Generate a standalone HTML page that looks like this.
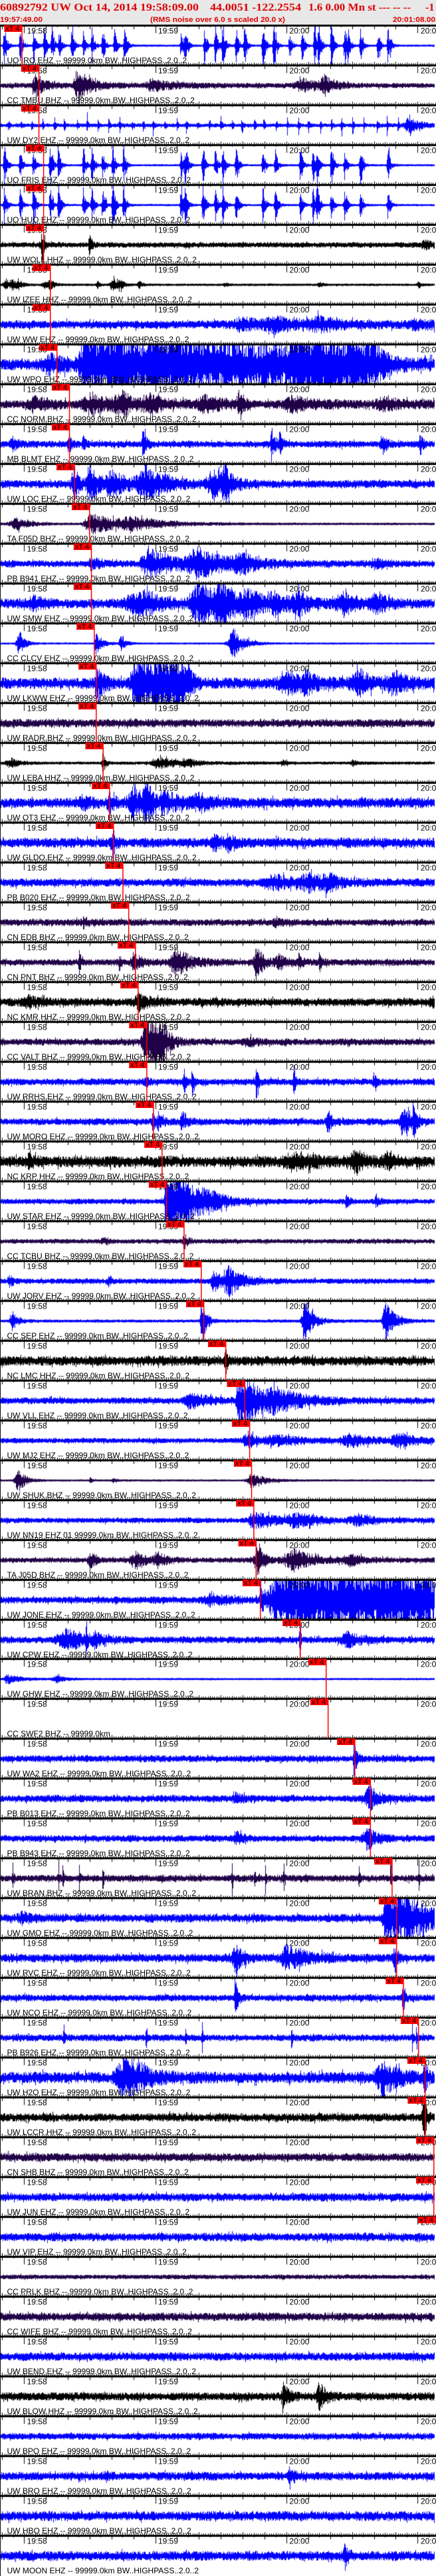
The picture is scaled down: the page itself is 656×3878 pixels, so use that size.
<!DOCTYPE html>
<html><head><meta charset="utf-8">
<style>
html,body{margin:0;padding:0;background:#fff;}
#w{position:relative;width:656px;height:3878px;overflow:hidden;}
canvas{position:absolute;left:0;top:0;}
svg{position:absolute;left:0;top:0;}
.t,.l{font-family:"Liberation Sans",sans-serif;font-size:12px;fill:#000;}
.x{font-family:"Liberation Sans",sans-serif;font-size:11px;fill:#000;}
.m,.v{fill:#f00;}
.h1{font-family:"Liberation Serif",serif;font-weight:bold;font-size:16px;fill:#e00000;}
.h2{font-family:"Liberation Sans",sans-serif;font-weight:bold;font-size:11px;fill:#e00000;}
</style></head><body><div id="w">
<canvas id="c" width="656" height="3878"></canvas>
<svg width="656" height="3878" viewBox="0 0 656 3878">
<rect x="0" y="0" width="656" height="37" fill="#e8e8e8"/>
<text class="h1" x="0" y="16" textLength="299" lengthAdjust="spacingAndGlyphs">60892792 UW Oct 14, 2014 19:58:09.00</text>
<text class="h1" x="316" y="16" textLength="137" lengthAdjust="spacingAndGlyphs">44.0051 -122.2554</text>
<text class="h1" x="464" y="16" textLength="154" lengthAdjust="spacingAndGlyphs">1.6 0.00 Mn st --- -- --</text>
<text class="h1" x="640" y="16">-1</text>
<text class="h2" x="0" y="33" textLength="64" lengthAdjust="spacingAndGlyphs">19:57:49.00</text>
<text class="h2" x="226" y="33" textLength="203" lengthAdjust="spacingAndGlyphs">(RMS noise over 6.0 s scaled 20.0 x)</text>
<text class="h2" x="591" y="33" textLength="64" lengthAdjust="spacingAndGlyphs">20:01:08.00</text>

<g transform="translate(0,38)"><text class="t" y="12.5"><tspan x="40.6">19:58</tspan><tspan x="238">19:59</tspan><tspan x="435.4">20:00</tspan><tspan x="632.9">20:01</tspan></text><text class="l" x="10.5" y="57">UO IRO EHZ -- 99999.0km BW..HIGHPASS..2.0..2</text><rect class="m" x="6.3" width="27" height="10"/><rect class="v" x="32.3" width="1.5" height="60"/><text class="x" x="8.3" y="8.5">xT 4</text></g>
<g transform="translate(0,98)"><text class="t" y="12.5"><tspan x="40.6">19:58</tspan><tspan x="238">19:59</tspan><tspan x="435.4">20:00</tspan><tspan x="632.9">20:01</tspan></text><text class="l" x="10.5" y="57">CC TMBU BHZ -- 99999.0km BW..HIGHPASS..2.0..2</text><rect class="m" x="31.8" width="27" height="10"/><rect class="v" x="57.8" width="1.5" height="60"/><text class="x" x="33.8" y="8.5">xT 4</text></g>
<g transform="translate(0,158)"><text class="t" y="12.5"><tspan x="40.6">19:58</tspan><tspan x="238">19:59</tspan><tspan x="435.4">20:00</tspan><tspan x="632.9">20:01</tspan></text><text class="l" x="10.5" y="57">UW DY2 EHZ -- 99999.0km BW..HIGHPASS..2.0..2</text><rect class="m" x="31.8" width="27" height="10"/><rect class="v" x="57.8" width="1.5" height="60"/><text class="x" x="33.8" y="8.5">xT 4</text></g>
<g transform="translate(0,218)"><text class="t" y="12.5"><tspan x="40.6">19:58</tspan><tspan x="238">19:59</tspan><tspan x="435.4">20:00</tspan><tspan x="632.9">20:01</tspan></text><text class="l" x="10.5" y="57">UO FRIS EHZ -- 99999.0km BW..HIGHPASS..2.0..2</text><rect class="m" x="38.9" width="27" height="10"/><rect class="v" x="64.9" width="1.5" height="60"/><text class="x" x="40.9" y="8.5">xT 4</text></g>
<g transform="translate(0,278)"><text class="t" y="12.5"><tspan x="40.6">19:58</tspan><tspan x="238">19:59</tspan><tspan x="435.4">20:00</tspan><tspan x="632.9">20:01</tspan></text><text class="l" x="10.5" y="57">UO HUO EHZ -- 99999.0km BW..HIGHPASS..2.0..2</text><rect class="m" x="38.9" width="27" height="10"/><rect class="v" x="64.9" width="1.5" height="60"/><text class="x" x="40.9" y="8.5">xT 4</text></g>
<g transform="translate(0,338)"><text class="t" y="12.5"><tspan x="40.6">19:58</tspan><tspan x="238">19:59</tspan><tspan x="435.4">20:00</tspan><tspan x="632.9">20:01</tspan></text><text class="l" x="10.5" y="57">UW WOLL HHZ -- 99999.0km BW..HIGHPASS..2.0..2</text><rect class="m" x="38.9" width="27" height="10"/><rect class="v" x="64.9" width="1.5" height="60"/><text class="x" x="40.9" y="8.5">xT 4</text></g>
<g transform="translate(0,398)"><text class="t" y="12.5"><tspan x="40.6">19:58</tspan><tspan x="238">19:59</tspan><tspan x="435.4">20:00</tspan><tspan x="632.9">20:01</tspan></text><text class="l" x="10.5" y="57">UW IZEE HHZ -- 99999.0km BW..HIGHPASS..2.0..2</text><rect class="m" x="49" width="27" height="10"/><rect class="v" x="75" width="1.5" height="60"/><text class="x" x="51" y="8.5">xT 4</text></g>
<g transform="translate(0,458)"><text class="t" y="12.5"><tspan x="40.6">19:58</tspan><tspan x="238">19:59</tspan><tspan x="435.4">20:00</tspan><tspan x="632.9">20:01</tspan></text><text class="l" x="10.5" y="57">UW WW EHZ -- 99999.0km BW..HIGHPASS..2.0..2</text><rect class="m" x="49" width="27" height="10"/><rect class="v" x="75" width="1.5" height="60"/><text class="x" x="51" y="8.5">xT 4</text></g>
<g transform="translate(0,518)"><text class="t" y="12.5"><tspan x="40.6">19:58</tspan><tspan x="238">19:59</tspan><tspan x="435.4">20:00</tspan><tspan x="632.9">20:01</tspan></text><text class="l" x="10.5" y="57">UW WPO EHZ -- 99999.0km BW..HIGHPASS..2.0..2</text><rect class="m" x="59" width="27" height="10"/><rect class="v" x="85" width="1.5" height="60"/><text class="x" x="61" y="8.5">xT 4</text></g>
<g transform="translate(0,578)"><text class="t" y="12.5"><tspan x="40.6">19:58</tspan><tspan x="238">19:59</tspan><tspan x="435.4">20:00</tspan><tspan x="632.9">20:01</tspan></text><text class="l" x="10.5" y="57">CC NORM BHZ -- 99999.0km BW..HIGHPASS..2.0..2</text><rect class="m" x="77.8" width="27" height="10"/><rect class="v" x="103.8" width="1.5" height="60"/><text class="x" x="79.8" y="8.5">xT 4</text></g>
<g transform="translate(0,638)"><text class="t" y="12.5"><tspan x="40.6">19:58</tspan><tspan x="238">19:59</tspan><tspan x="435.4">20:00</tspan><tspan x="632.9">20:01</tspan></text><text class="l" x="10.5" y="57">MB BLMT EHZ -- 99999.0km BW..HIGHPASS..2.0..2</text><rect class="m" x="77.8" width="27" height="10"/><rect class="v" x="103.8" width="1.5" height="60"/><text class="x" x="79.8" y="8.5">xT 4</text></g>
<g transform="translate(0,698)"><text class="t" y="12.5"><tspan x="40.6">19:58</tspan><tspan x="238">19:59</tspan><tspan x="435.4">20:00</tspan><tspan x="632.9">20:01</tspan></text><text class="l" x="10.5" y="57">UW LOC EHZ -- 99999.0km BW..HIGHPASS..2.0..2</text><rect class="m" x="85" width="27" height="10"/><rect class="v" x="111" width="1.5" height="60"/><text class="x" x="87" y="8.5">xT 4</text></g>
<g transform="translate(0,758)"><text class="t" y="12.5"><tspan x="40.6">19:58</tspan><tspan x="238">19:59</tspan><tspan x="435.4">20:00</tspan><tspan x="632.9">20:01</tspan></text><text class="l" x="10.5" y="57">TA F05D BHZ -- 99999.0km BW..HIGHPASS..2.0..2</text><rect class="m" x="108" width="27" height="10"/><rect class="v" x="134" width="1.5" height="60"/><text class="x" x="110" y="8.5">xT 4</text></g>
<g transform="translate(0,818)"><text class="t" y="12.5"><tspan x="40.6">19:58</tspan><tspan x="238">19:59</tspan><tspan x="435.4">20:00</tspan><tspan x="632.9">20:01</tspan></text><text class="l" x="10.5" y="57">PB B941 EHZ -- 99999.0km BW..HIGHPASS..2.0..2</text><rect class="m" x="110.8" width="27" height="10"/><rect class="v" x="136.8" width="1.5" height="60"/><text class="x" x="112.8" y="8.5">xT 4</text></g>
<g transform="translate(0,878)"><text class="t" y="12.5"><tspan x="40.6">19:58</tspan><tspan x="238">19:59</tspan><tspan x="435.4">20:00</tspan><tspan x="632.9">20:01</tspan></text><text class="l" x="10.5" y="57">UW SMW EHZ -- 99999.0km BW..HIGHPASS..2.0..2</text><rect class="m" x="110.8" width="27" height="10"/><rect class="v" x="136.8" width="1.5" height="60"/><text class="x" x="112.8" y="8.5">xT 4</text></g>
<g transform="translate(0,938)"><text class="t" y="12.5"><tspan x="40.6">19:58</tspan><tspan x="238">19:59</tspan><tspan x="435.4">20:00</tspan><tspan x="632.9">20:01</tspan></text><text class="l" x="10.5" y="57">CC CLCV EHZ -- 99999.0km BW..HIGHPASS..2.0..2</text><rect class="m" x="115.1" width="27" height="10"/><rect class="v" x="141.1" width="1.5" height="60"/><text class="x" x="117.1" y="8.5">xT 4</text></g>
<g transform="translate(0,998)"><text class="t" y="12.5"><tspan x="40.6">19:58</tspan><tspan x="238">19:59</tspan><tspan x="435.4">20:00</tspan><tspan x="632.9">20:01</tspan></text><text class="l" x="10.5" y="57">UW LKWW EHZ -- 99999.0km BW..HIGHPASS..2.0..2</text><rect class="m" x="118" width="27" height="10"/><rect class="v" x="144" width="1.5" height="60"/><text class="x" x="120" y="8.5">xT 4</text></g>
<g transform="translate(0,1058)"><text class="t" y="12.5"><tspan x="40.6">19:58</tspan><tspan x="238">19:59</tspan><tspan x="435.4">20:00</tspan><tspan x="632.9">20:01</tspan></text><text class="l" x="10.5" y="57">UW RADR BHZ -- 99999.0km BW..HIGHPASS..2.0..2</text><rect class="m" x="118" width="27" height="10"/><rect class="v" x="144" width="1.5" height="60"/><text class="x" x="120" y="8.5">xT 4</text></g>
<g transform="translate(0,1118)"><text class="t" y="12.5"><tspan x="40.6">19:58</tspan><tspan x="238">19:59</tspan><tspan x="435.4">20:00</tspan><tspan x="632.9">20:01</tspan></text><text class="l" x="10.5" y="57">UW LEBA HHZ -- 99999.0km BW..HIGHPASS..2.0..2</text><rect class="m" x="128.4" width="27" height="10"/><rect class="v" x="154.4" width="1.5" height="60"/><text class="x" x="130.4" y="8.5">xT 4</text></g>
<g transform="translate(0,1178)"><text class="t" y="12.5"><tspan x="40.6">19:58</tspan><tspan x="238">19:59</tspan><tspan x="435.4">20:00</tspan><tspan x="632.9">20:01</tspan></text><text class="l" x="10.5" y="57">UW OT3 EHZ -- 99999.0km BW..HIGHPASS..2.0..2</text><rect class="m" x="138.1" width="27" height="10"/><rect class="v" x="164.1" width="1.5" height="60"/><text class="x" x="140.1" y="8.5">xT 4</text></g>
<g transform="translate(0,1238)"><text class="t" y="12.5"><tspan x="40.6">19:58</tspan><tspan x="238">19:59</tspan><tspan x="435.4">20:00</tspan><tspan x="632.9">20:01</tspan></text><text class="l" x="10.5" y="57">UW GLDO EHZ -- 99999.0km BW..HIGHPASS..2.0..2</text><rect class="m" x="144" width="27" height="10"/><rect class="v" x="170" width="1.5" height="60"/><text class="x" x="146" y="8.5">xT 4</text></g>
<g transform="translate(0,1298)"><text class="t" y="12.5"><tspan x="40.6">19:58</tspan><tspan x="238">19:59</tspan><tspan x="435.4">20:00</tspan><tspan x="632.9">20:01</tspan></text><text class="l" x="10.5" y="57">PB B020 EHZ -- 99999.0km BW..HIGHPASS..2.0..2</text><rect class="m" x="158.2" width="27" height="10"/><rect class="v" x="184.2" width="1.5" height="60"/><text class="x" x="160.2" y="8.5">xT 4</text></g>
<g transform="translate(0,1358)"><text class="t" y="12.5"><tspan x="40.6">19:58</tspan><tspan x="238">19:59</tspan><tspan x="435.4">20:00</tspan><tspan x="632.9">20:01</tspan></text><text class="l" x="10.5" y="57">CN EDB BHZ -- 99999.0km BW..HIGHPASS..2.0..2</text><rect class="m" x="166.9" width="27" height="10"/><rect class="v" x="192.9" width="1.5" height="60"/><text class="x" x="168.9" y="8.5">xT 4</text></g>
<g transform="translate(0,1418)"><text class="t" y="12.5"><tspan x="40.6">19:58</tspan><tspan x="238">19:59</tspan><tspan x="435.4">20:00</tspan><tspan x="632.9">20:01</tspan></text><text class="l" x="10.5" y="57">CN PNT BHZ -- 99999.0km BW..HIGHPASS..2.0..2</text><rect class="m" x="177" width="27" height="10"/><rect class="v" x="203" width="1.5" height="60"/><text class="x" x="179" y="8.5">xT 4</text></g>
<g transform="translate(0,1478)"><text class="t" y="12.5"><tspan x="40.6">19:58</tspan><tspan x="238">19:59</tspan><tspan x="435.4">20:00</tspan><tspan x="632.9">20:01</tspan></text><text class="l" x="10.5" y="57">NC KMR HHZ -- 99999.0km BW..HIGHPASS..2.0..2</text><rect class="m" x="181.1" width="27" height="10"/><rect class="v" x="207.1" width="1.5" height="60"/><text class="x" x="183.1" y="8.5">xT 4</text></g>
<g transform="translate(0,1538)"><text class="t" y="12.5"><tspan x="40.6">19:58</tspan><tspan x="238">19:59</tspan><tspan x="435.4">20:00</tspan><tspan x="632.9">20:01</tspan></text><text class="l" x="10.5" y="57">CC VALT BHZ -- 99999.0km BW..HIGHPASS..2.0..2</text><rect class="m" x="194.2" width="27" height="10"/><rect class="v" x="220.2" width="1.5" height="60"/><text class="x" x="196.2" y="8.5">xT 4</text></g>
<g transform="translate(0,1598)"><text class="t" y="12.5"><tspan x="40.6">19:58</tspan><tspan x="238">19:59</tspan><tspan x="435.4">20:00</tspan><tspan x="632.9">20:01</tspan></text><text class="l" x="10.5" y="57">UW RRHS EHZ -- 99999.0km BW..HIGHPASS..2.0..2</text><rect class="m" x="194.2" width="27" height="10"/><rect class="v" x="220.2" width="1.5" height="60"/><text class="x" x="196.2" y="8.5">xT 4</text></g>
<g transform="translate(0,1658)"><text class="t" y="12.5"><tspan x="40.6">19:58</tspan><tspan x="238">19:59</tspan><tspan x="435.4">20:00</tspan><tspan x="632.9">20:01</tspan></text><text class="l" x="10.5" y="57">UW MORO EHZ -- 99999.0km BW..HIGHPASS..2.0..2</text><rect class="m" x="204.2" width="27" height="10"/><rect class="v" x="230.2" width="1.5" height="60"/><text class="x" x="206.2" y="8.5">xT 4</text></g>
<g transform="translate(0,1718)"><text class="t" y="12.5"><tspan x="40.6">19:58</tspan><tspan x="238">19:59</tspan><tspan x="435.4">20:00</tspan><tspan x="632.9">20:01</tspan></text><text class="l" x="10.5" y="57">NC KRP HHZ -- 99999.0km BW..HIGHPASS..2.0..2</text><rect class="m" x="217.1" width="27" height="10"/><rect class="v" x="243.1" width="1.5" height="60"/><text class="x" x="219.1" y="8.5">xT 4</text></g>
<g transform="translate(0,1778)"><text class="t" y="12.5"><tspan x="40.6">19:58</tspan><tspan x="238">19:59</tspan><tspan x="435.4">20:00</tspan><tspan x="632.9">20:01</tspan></text><text class="l" x="10.5" y="57">UW STAR EHZ -- 99999.0km BW..HIGHPASS..2.0..2</text><rect class="m" x="223.8" width="27" height="10"/><rect class="v" x="249.8" width="1.5" height="60"/><text class="x" x="225.8" y="8.5">xT 4</text></g>
<g transform="translate(0,1838)"><text class="t" y="12.5"><tspan x="40.6">19:58</tspan><tspan x="238">19:59</tspan><tspan x="435.4">20:00</tspan><tspan x="632.9">20:01</tspan></text><text class="l" x="10.5" y="57">CC TCBU BHZ -- 99999.0km BW..HIGHPASS..2.0..2</text><rect class="m" x="250.2" width="27" height="10"/><rect class="v" x="276.2" width="1.5" height="60"/><text class="x" x="252.2" y="8.5">xT 4</text></g>
<g transform="translate(0,1898)"><text class="t" y="12.5"><tspan x="40.6">19:58</tspan><tspan x="238">19:59</tspan><tspan x="435.4">20:00</tspan><tspan x="632.9">20:01</tspan></text><text class="l" x="10.5" y="57">UW JORV EHZ -- 99999.0km BW..HIGHPASS..2.0..2</text><rect class="m" x="276.1" width="27" height="10"/><rect class="v" x="302.1" width="1.5" height="60"/><text class="x" x="278.1" y="8.5">xT 4</text></g>
<g transform="translate(0,1958)"><text class="t" y="12.5"><tspan x="40.6">19:58</tspan><tspan x="238">19:59</tspan><tspan x="435.4">20:00</tspan><tspan x="632.9">20:01</tspan></text><text class="l" x="10.5" y="57">CC SEP EHZ -- 99999.0km BW..HIGHPASS..2.0..2</text><rect class="m" x="279.9" width="27" height="10"/><rect class="v" x="305.9" width="1.5" height="60"/><text class="x" x="281.9" y="8.5">xT 4</text></g>
<g transform="translate(0,2018)"><text class="t" y="12.5"><tspan x="40.6">19:58</tspan><tspan x="238">19:59</tspan><tspan x="435.4">20:00</tspan><tspan x="632.9">20:01</tspan></text><text class="l" x="10.5" y="57">NC LMC HHZ -- 99999.0km BW..HIGHPASS..2.0..2</text><rect class="m" x="312.9" width="27" height="10"/><rect class="v" x="338.9" width="1.5" height="60"/><text class="x" x="314.9" y="8.5">xT 4</text></g>
<g transform="translate(0,2078)"><text class="t" y="12.5"><tspan x="40.6">19:58</tspan><tspan x="238">19:59</tspan><tspan x="435.4">20:00</tspan><tspan x="632.9">20:01</tspan></text><text class="l" x="10.5" y="57">UW VLL EHZ -- 99999.0km BW..HIGHPASS..2.0..2</text><rect class="m" x="341.4" width="27" height="10"/><rect class="v" x="367.4" width="1.5" height="60"/><text class="x" x="343.4" y="8.5">xT 4</text></g>
<g transform="translate(0,2138)"><text class="t" y="12.5"><tspan x="40.6">19:58</tspan><tspan x="238">19:59</tspan><tspan x="435.4">20:00</tspan><tspan x="632.9">20:01</tspan></text><text class="l" x="10.5" y="57">UW MJ2 EHZ -- 99999.0km BW..HIGHPASS..2.0..2</text><rect class="m" x="348.9" width="27" height="10"/><rect class="v" x="374.9" width="1.5" height="60"/><text class="x" x="350.9" y="8.5">xT 4</text></g>
<g transform="translate(0,2198)"><text class="t" y="12.5"><tspan x="40.6">19:58</tspan><tspan x="238">19:59</tspan><tspan x="435.4">20:00</tspan><tspan x="632.9">20:01</tspan></text><text class="l" x="10.5" y="57">UW SHUK BHZ -- 99999.0km BW..HIGHPASS..2.0..2</text><rect class="m" x="351.8" width="27" height="10"/><rect class="v" x="377.8" width="1.5" height="60"/><text class="x" x="353.8" y="8.5">xT 4</text></g>
<g transform="translate(0,2258)"><text class="t" y="12.5"><tspan x="40.6">19:58</tspan><tspan x="238">19:59</tspan><tspan x="435.4">20:00</tspan><tspan x="632.9">20:01</tspan></text><text class="l" x="10.5" y="57">UW NN19 EHZ 01 99999.0km BW..HIGHPASS..2.0..2</text><rect class="m" x="355.2" width="27" height="10"/><rect class="v" x="381.2" width="1.5" height="60"/><text class="x" x="357.2" y="8.5">xT 4</text></g>
<g transform="translate(0,2318)"><text class="t" y="12.5"><tspan x="40.6">19:58</tspan><tspan x="238">19:59</tspan><tspan x="435.4">20:00</tspan><tspan x="632.9">20:01</tspan></text><text class="l" x="10.5" y="57">TA J05D BHZ -- 99999.0km BW..HIGHPASS..2.0..2</text><rect class="m" x="358.6" width="27" height="10"/><rect class="v" x="384.6" width="1.5" height="60"/><text class="x" x="360.6" y="8.5">xT 4</text></g>
<g transform="translate(0,2378)"><text class="t" y="12.5"><tspan x="40.6">19:58</tspan><tspan x="238">19:59</tspan><tspan x="435.4">20:00</tspan><tspan x="632.9">20:01</tspan></text><text class="l" x="10.5" y="57">UW JONE EHZ -- 99999.0km BW..HIGHPASS..2.0..2</text><rect class="m" x="364.9" width="27" height="10"/><rect class="v" x="390.9" width="1.5" height="60"/><text class="x" x="366.9" y="8.5">xT 4</text></g>
<g transform="translate(0,2438)"><text class="t" y="12.5"><tspan x="40.6">19:58</tspan><tspan x="238">19:59</tspan><tspan x="435.4">20:00</tspan><tspan x="632.9">20:01</tspan></text><text class="l" x="10.5" y="57">UW CPW EHZ -- 99999.0km BW..HIGHPASS..2.0..2</text><rect class="m" x="425.1" width="27" height="10"/><rect class="v" x="451.1" width="1.5" height="60"/><text class="x" x="427.1" y="8.5">xT 4</text></g>
<g transform="translate(0,2497)"><text class="t" y="12.5"><tspan x="40.6">19:58</tspan><tspan x="238">19:59</tspan><tspan x="435.4">20:00</tspan><tspan x="632.9">20:01</tspan></text><text class="l" x="10.5" y="57">UW GHW EHZ -- 99999.0km BW..HIGHPASS..2.0..2</text><rect class="m" x="464" width="27" height="10"/><rect class="v" x="490" width="1.5" height="60"/><text class="x" x="466" y="8.5">xT 4</text></g>
<g transform="translate(0,2557)"><text class="t" y="12.5"><tspan x="40.6">19:58</tspan><tspan x="238">19:59</tspan><tspan x="435.4">20:00</tspan><tspan x="632.9">20:01</tspan></text><text class="l" x="10.5" y="57">CC SWF2 BHZ -- 99999.0km</text><rect class="m" x="466.9" width="27" height="10"/><rect class="v" x="492.9" width="1.5" height="60"/><text class="x" x="468.9" y="8.5">xT 4</text></g>
<g transform="translate(0,2617)"><text class="t" y="12.5"><tspan x="40.6">19:58</tspan><tspan x="238">19:59</tspan><tspan x="435.4">20:00</tspan><tspan x="632.9">20:01</tspan></text><text class="l" x="10.5" y="57">UW WA2 EHZ -- 99999.0km BW..HIGHPASS..2.0..2</text><rect class="m" x="507.1" width="27" height="10"/><rect class="v" x="533.1" width="1.5" height="60"/><text class="x" x="509.1" y="8.5">xT 4</text></g>
<g transform="translate(0,2677)"><text class="t" y="12.5"><tspan x="40.6">19:58</tspan><tspan x="238">19:59</tspan><tspan x="435.4">20:00</tspan><tspan x="632.9">20:01</tspan></text><text class="l" x="10.5" y="57">PB B013 EHZ -- 99999.0km BW..HIGHPASS..2.0..2</text><rect class="m" x="530.6" width="27" height="10"/><rect class="v" x="556.6" width="1.5" height="60"/><text class="x" x="532.6" y="8.5">xT 4</text></g>
<g transform="translate(0,2737)"><text class="t" y="12.5"><tspan x="40.6">19:58</tspan><tspan x="238">19:59</tspan><tspan x="435.4">20:00</tspan><tspan x="632.9">20:01</tspan></text><text class="l" x="10.5" y="57">PB B943 EHZ -- 99999.0km BW..HIGHPASS..2.0..2</text><rect class="m" x="530.6" width="27" height="10"/><rect class="v" x="556.6" width="1.5" height="60"/><text class="x" x="532.6" y="8.5">xT 4</text></g>
<g transform="translate(0,2797)"><text class="t" y="12.5"><tspan x="40.6">19:58</tspan><tspan x="238">19:59</tspan><tspan x="435.4">20:00</tspan><tspan x="632.9">20:01</tspan></text><text class="l" x="10.5" y="57">UW BRAN BHZ -- 99999.0km BW..HIGHPASS..2.0..2</text><rect class="m" x="563.2" width="27" height="10"/><rect class="v" x="589.2" width="1.5" height="60"/><text class="x" x="565.2" y="8.5">xT 4</text></g>
<g transform="translate(0,2857)"><text class="t" y="12.5"><tspan x="40.6">19:58</tspan><tspan x="238">19:59</tspan><tspan x="435.4">20:00</tspan><tspan x="632.9">20:01</tspan></text><text class="l" x="10.5" y="57">UW GMO EHZ -- 99999.0km BW..HIGHPASS..2.0..2</text><rect class="m" x="569.9" width="27" height="10"/><rect class="v" x="595.9" width="1.5" height="60"/><text class="x" x="571.9" y="8.5">xT 4</text></g>
<g transform="translate(0,2917)"><text class="t" y="12.5"><tspan x="40.6">19:58</tspan><tspan x="238">19:59</tspan><tspan x="435.4">20:00</tspan><tspan x="632.9">20:01</tspan></text><text class="l" x="10.5" y="57">UW RVC EHZ -- 99999.0km BW..HIGHPASS..2.0..2</text><rect class="m" x="569.9" width="27" height="10"/><rect class="v" x="595.9" width="1.5" height="60"/><text class="x" x="571.9" y="8.5">xT 4</text></g>
<g transform="translate(0,2977)"><text class="t" y="12.5"><tspan x="40.6">19:58</tspan><tspan x="238">19:59</tspan><tspan x="435.4">20:00</tspan><tspan x="632.9">20:01</tspan></text><text class="l" x="10.5" y="57">UW NCO EHZ -- 99999.0km BW..HIGHPASS..2.0..2</text><rect class="m" x="580.3" width="27" height="10"/><rect class="v" x="606.3" width="1.5" height="60"/><text class="x" x="582.3" y="8.5">xT 4</text></g>
<g transform="translate(0,3037)"><text class="t" y="12.5"><tspan x="40.6">19:58</tspan><tspan x="238">19:59</tspan><tspan x="435.4">20:00</tspan><tspan x="632.9">20:01</tspan></text><text class="l" x="10.5" y="57">PB B926 EHZ -- 99999.0km BW..HIGHPASS..2.0..2</text><rect class="m" x="602.9" width="27" height="10"/><rect class="v" x="628.9" width="1.5" height="60"/><text class="x" x="604.9" y="8.5">xT 4</text></g>
<g transform="translate(0,3097)"><text class="t" y="12.5"><tspan x="40.6">19:58</tspan><tspan x="238">19:59</tspan><tspan x="435.4">20:00</tspan><tspan x="632.9">20:01</tspan></text><text class="l" x="10.5" y="57">UW H2O EHZ -- 99999.0km BW..HIGHPASS..2.0..2</text><rect class="m" x="612.9" width="27" height="10"/><rect class="v" x="638.9" width="1.5" height="60"/><text class="x" x="614.9" y="8.5">xT 4</text></g>
<g transform="translate(0,3157)"><text class="t" y="12.5"><tspan x="40.6">19:58</tspan><tspan x="238">19:59</tspan><tspan x="435.4">20:00</tspan><tspan x="632.9">20:01</tspan></text><text class="l" x="10.5" y="57">UW LCCR HHZ -- 99999.0km BW..HIGHPASS..2.0..2</text><rect class="m" x="613.4" width="27" height="10"/><rect class="v" x="639.4" width="1.5" height="60"/><text class="x" x="615.4" y="8.5">xT 4</text></g>
<g transform="translate(0,3217)"><text class="t" y="12.5"><tspan x="40.6">19:58</tspan><tspan x="238">19:59</tspan><tspan x="435.4">20:00</tspan><tspan x="632.9">20:01</tspan></text><text class="l" x="10.5" y="57">CN SHB BHZ -- 99999.0km BW..HIGHPASS..2.0..2</text><rect class="m" x="626" width="27" height="10"/><rect class="v" x="652" width="1.5" height="60"/><text class="x" x="628" y="8.5">xT 4</text></g>
<g transform="translate(0,3277)"><text class="t" y="12.5"><tspan x="40.6">19:58</tspan><tspan x="238">19:59</tspan><tspan x="435.4">20:00</tspan><tspan x="632.9">20:01</tspan></text><text class="l" x="10.5" y="57">UW JUN EHZ -- 99999.0km BW..HIGHPASS..2.0..2</text><rect class="m" x="626" width="27" height="10"/><rect class="v" x="652" width="1.5" height="60"/><text class="x" x="628" y="8.5">xT 4</text></g>
<g transform="translate(0,3337)"><text class="t" y="12.5"><tspan x="40.6">19:58</tspan><tspan x="238">19:59</tspan><tspan x="435.4">20:00</tspan><tspan x="632.9">20:01</tspan></text><text class="l" x="10.5" y="57">UW VIP EHZ -- 99999.0km BW..HIGHPASS..2.0..2</text><rect class="m" x="628.9" width="27" height="10"/><text class="x" x="630.9" y="8.5">xT 4</text></g>
<g transform="translate(0,3397)"><text class="t" y="12.5"><tspan x="40.6">19:58</tspan><tspan x="238">19:59</tspan><tspan x="435.4">20:00</tspan><tspan x="632.9">20:01</tspan></text><text class="l" x="10.5" y="57">CC PRLK BHZ -- 99999.0km BW..HIGHPASS..2.0..2</text></g>
<g transform="translate(0,3457)"><text class="t" y="12.5"><tspan x="40.6">19:58</tspan><tspan x="238">19:59</tspan><tspan x="435.4">20:00</tspan><tspan x="632.9">20:01</tspan></text><text class="l" x="10.5" y="57">CC WIFE BHZ -- 99999.0km BW..HIGHPASS..2.0..2</text></g>
<g transform="translate(0,3517)"><text class="t" y="12.5"><tspan x="40.6">19:58</tspan><tspan x="238">19:59</tspan><tspan x="435.4">20:00</tspan><tspan x="632.9">20:01</tspan></text><text class="l" x="10.5" y="57">UW BEND EHZ -- 99999.0km BW..HIGHPASS..2.0..2</text></g>
<g transform="translate(0,3577)"><text class="t" y="12.5"><tspan x="40.6">19:58</tspan><tspan x="238">19:59</tspan><tspan x="435.4">20:00</tspan><tspan x="632.9">20:01</tspan></text><text class="l" x="10.5" y="57">UW BLOW HHZ -- 99999.0km BW..HIGHPASS..2.0..2</text></g>
<g transform="translate(0,3637)"><text class="t" y="12.5"><tspan x="40.6">19:58</tspan><tspan x="238">19:59</tspan><tspan x="435.4">20:00</tspan><tspan x="632.9">20:01</tspan></text><text class="l" x="10.5" y="57">UW BPO EHZ -- 99999.0km BW..HIGHPASS..2.0..2</text></g>
<g transform="translate(0,3697)"><text class="t" y="12.5"><tspan x="40.6">19:58</tspan><tspan x="238">19:59</tspan><tspan x="435.4">20:00</tspan><tspan x="632.9">20:01</tspan></text><text class="l" x="10.5" y="57">UW BRO EHZ -- 99999.0km BW..HIGHPASS..2.0..2</text></g>
<g transform="translate(0,3757)"><text class="t" y="12.5"><tspan x="40.6">19:58</tspan><tspan x="238">19:59</tspan><tspan x="435.4">20:00</tspan><tspan x="632.9">20:01</tspan></text><text class="l" x="10.5" y="57">UW HBO EHZ -- 99999.0km BW..HIGHPASS..2.0..2</text></g>
<g transform="translate(0,3817)"><text class="t" y="12.5"><tspan x="40.6">19:58</tspan><tspan x="238">19:59</tspan><tspan x="435.4">20:00</tspan><tspan x="632.9">20:01</tspan></text><text class="l" x="10.5" y="57">UW MOON EHZ -- 99999.0km BW..HIGHPASS..2.0..2</text></g>
</svg>
</div>
<script>
(function(){
var c=document.getElementById('c'),ctx=c.getContext('2d');
var s=987654;
function R(){s|=0;s=s+0x6D2B79F5|0;var t=Math.imul(s^s>>>15,1|s);t=t+Math.imul(t^t>>>7,61|t)^t;return((t^t>>>14)>>>0)/4294967296;}
var S=1.2552,B='#0000ff',P='#200048',K='#000000';
function burst(l){return l.map(function(p){return [p,20+R()*16,2.5,1.2];});}
function spikes(l,a){return l.map(function(p){return [p,a*(0.8+R()*0.4),0.8,0.5];});}
var IRO=[5,24,40,53,62,71,86,100,110,123,137,149,217,222,245,258,267,283,293,315,328,347,362,377,382,397,413,417,432,453,465];
var FRIS=[5,24,40,60,70,100,110,123,135,148,217,222,243,258,267,283,315,330,360,375,380,397,413,432,465];
var per=[];for(var i=0;i<38;i++)per.push([10+13.3*i+R()*3,7+R()*8,1,0.5]);per.push([490,9,15,5]);
var T=[
[B,0.8,burst(IRO)],
[P,3,[[43,14,12,4],[93,22,15,4],[182,7,20,6],[363,8,15,8],[390,12,10,6]]],
[B,2,per],
[B,0.8,burst(FRIS)],
[B,0.8,burst(FRIS)],
[K,3,[[50,18,3,1],[107,14,3,1],[510,5,8,4]]],
[K,1,[[7,8,5,3],[15,6,4,2],[22,7,4,2],[53,6,4,2],[60,8,4,2],[117,4,3,2],[135,9,6,3],[143,6,4,2],[167,5,3,2],[270,3,3,2],[383,3,3,2],[502,5,3,2]]],
[B,5,[[290,6,30,10],[330,8,30,10],[380,6,30,10],[500,4,20,10]]],
[B,7,[[60,10,20,8],[103,32,15,8,135],[140,22,20,8,185],[187,32,10,8,257],[270,25,10,8,303],[320,25,10,8,350],[353,32,5,5,380],[382,32,20,5,443]]],
[P,5,[[43,8,20,8],[110,12,20,10],[147,14,15,10],[180,10,15,10],[247,10,20,10],[287,22,4,2],[350,8,30,10],[460,6,30,10]]],
[B,4,[[15,8,6,3],[82,12,3,1],[100,8,3,2],[171,20,4,1],[325,22,4,1],[335,14,3,1],[458,12,5,2],[503,18,3,1]]],
[B,5,[[89,22,6,3],[107,25,10,3],[135,14,20,8],[175,18,25,10],[257,20,15,8],[270,18,5,3]]],
[P,1,[[20,8,15,8],[108,14,40,6],[160,6,40,15]]],
[B,4,[[110,8,8,3],[180,18,30,10],[237,18,30,10],[290,10,20,10],[450,6,10,5]]],
[B,6,[[40,8,10,5],[160,10,20,10],[175,10,20,10],[240,26,20,10],[265,28,15,8],[300,12,20,10],[330,10,15,8],[360,12,10,8],[413,12,10,8],[453,12,10,8]]],
[B,0.7,[[23,18,6,3],[115,14,8,2],[145,10,5,2],[280,20,12,6]]],
[B,7,[[117,14,10,3],[163,32,5,5,225],[345,12,20,10],[367,10,10,5],[433,14,10,10],[473,12,15,10]]],
[P,5,[]],
[K,1.5,[[13,6,10,5],[123,15,3,1],[188,7,25,5],[225,5,10,5],[340,3,5,3],[423,4,4,2]]],
[B,6,[[100,8,10,5],[130,14,5,2],[160,18,15,6],[175,25,8,3],[200,12,15,6],[240,8,20,10]]],
[B,6,[[135,16,4,2],[257,8,10,5],[273,10,5,2]]],
[B,5,[[330,8,20,10],[370,10,20,10],[395,8,10,8]]],
[P,4,[[100,5,3,2],[330,4,5,3]]],
[P,4,[[95,14,2,1],[143,10,2,1],[160,10,10,3],[210,20,15,5],[308,24,6,3],[335,8,10,5],[358,10,3,1],[383,10,3,1]]],
[K,5,[[35,6,15,8],[166,10,10,4],[520,5,10,5]]],
[P,4,[[173,32,8,3,195],[300,4,10,5]]],
[B,4,[[175,8,3,2],[220,22,2,1],[230,22,2,1],[307,24,2,1],[352,22,2,1],[448,10,3,1]]],
[B,4,[[183,14,3,1],[190,10,5,2],[218,12,5,2],[392,20,4,1],[483,22,8,3],[495,22,3,1]]],
[K,7,[[35,8,5,3],[350,8,30,10],[425,10,10,5],[465,8,10,5]]],
[B,3,[[199,40,25,2,215],[250,6,20,10],[415,10,3,1],[450,10,3,1]]],
[P,2.5,[[220,12,4,1],[125,3,5,5]]],
[B,3,[[12,6,5,3],[130,5,3,2],[257,14,10,4],[275,18,15,5]]],
[B,1.5,[[15,12,6,3],[241,40,5,1],[365,28,10,3],[462,28,10,3]]],
[K,6,[[270,15,3,1]]],
[B,4,[[230,8,20,8],[287,35,8,3],[300,20,25,8],[330,12,30,10]]],
[B,3,[[297,10,10,5],[330,6,30,10],[420,8,20,10],[480,8,20,10]]],
[P,0.8,[[22,16,8,4],[108,4,2,1],[135,4,3,1],[302,10,15,5]]],
[B,3,[[303,10,30,5],[355,8,20,10],[430,6,20,10]]],
[P,3,[[108,15,5,2],[163,10,12,6],[190,8,10,5],[308,22,8,3],[353,14,20,10],[420,6,15,10]]],
[B,4,[[255,6,20,10],[312,24,4,1],[333,40,8,10,515]]],
[B,4,[[80,12,25,10],[103,35,1,0.5],[113,10,5,3],[359,35,1,0.5],[417,10,15,8]]],
[B,0.8,[[10,6,15,5],[68,5,10,5]]],
[null,0,[]],
[B,4,[[424,25,3,1]]],
[B,4,[[283,6,8,4],[443,16,10,5]]],
[B,4,[[283,8,8,4],[440,14,10,5]]],
[P,4,spikes([15,70,75,95,123,278,305,318,340,430,468,502],22)],
[B,5,[[27,6,10,5],[462,30,30,3,490]]],
[B,5,[[283,18,8,4],[343,14,25,5],[473,16,4,2]]],
[B,4,[[282,25,3,1],[483,25,2,1]]],
[B,4,spikes([76,175,222,242,349,494,499],25)],
[B,7,[[150,25,25,10],[460,20,15,8],[508,25,3,1]]],
[K,5,[[508,30,3,2]]],
[P,5,[]],
[B,5,[[521,35,0.4,0.3]]],
[B,5,[[521,40,0.4,0.3]]],
[P,2.5,[]],
[P,5,[]],
[B,5,[]],
[K,5,[[340,15,6,3],[382,18,8,3]]],
[B,4,[]],
[B,5,[[127,5,5,3],[347,14,5,2]]],
[B,6,[]],
[B,6,[[413,14,4,2]]]
];
function ay(k){return Math.round(38.3+59.98*k);}
T.forEach(function(t,k){
 var col=t[0];if(!col)return;
 var base=t[1],evs=t[2].map(function(e){return [e[0]*S,e[1],(e[2]||5)*S,(e[3]||1)*S,e[4]?e[4]*S:e[0]*S];});
 var cy=ay(k)+30.5;ctx.fillStyle=col;
 var sm=1;
 for(var x=1;x<654;x++){
  sm=sm*0.92+(0.5+R())*0.08;
  var e=base*sm;
  for(var j=0;j<evs.length;j++){var v=evs[j],q;
   if(x<v[0])q=Math.exp(-Math.pow((v[0]-x)/v[3],2));else if(x<=v[4])q=1;else q=Math.exp(-(x-v[4])/v[2]);
   e+=v[1]*q;}
  var u1=e*(0.3+0.8*R()),u2=e*(0.3+0.8*R());
  if(R()<0.05)u1*=1.5;if(R()<0.05)u2*=1.5;
  u1=Math.min(u1,29);u2=Math.min(u2,28);
  ctx.fillRect(x,cy-u1-0.5,1,u1+u2+1.5);
 }
});
ctx.fillStyle='#000';
ctx.fillRect(0,38,1,3840);
for(var k=0;k<64;k++){var y=ay(k);
 ctx.fillRect(0,y-1,656,3);
 for(var i=1;i<200;i++){var x=Math.round(i*3.29),sec=(i+49)%60;
  if(sec==0)ctx.fillRect(x,y-5,1,17);
  else if(sec%10==0)ctx.fillRect(x,y-5,1,11);
  else if(sec%5==0)ctx.fillRect(x,y-4,1,7);
  else ctx.fillRect(x,y-3,1,3);
 }
}
})();
</script>
</body></html>
